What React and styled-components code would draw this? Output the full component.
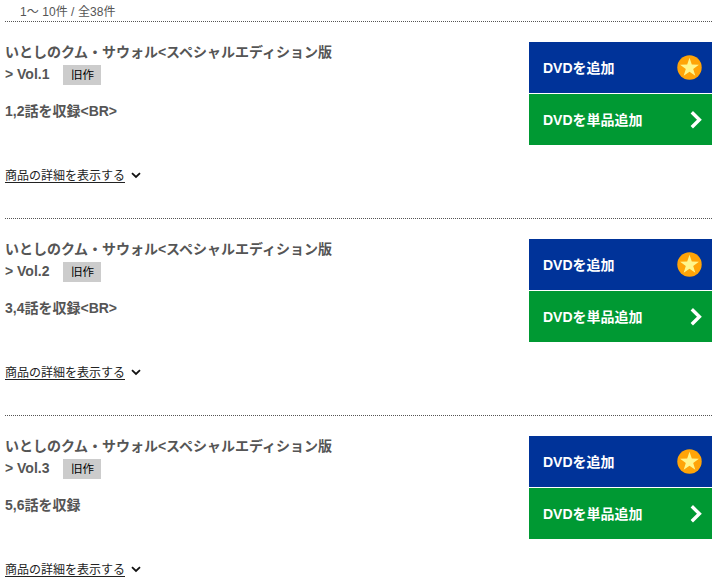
import React from "react";
import styled, { createGlobalStyle } from "styled-components";

const Global = createGlobalStyle`
  * { box-sizing: border-box; }
  body {
    margin: 0;
    background: #fff;
    color: #555;
    font-family: "Liberation Sans", "Noto Sans CJK JP", sans-serif;
    overflow: hidden;
  }
`;

const Page = styled.main`
  width: 707px;
  height: 587px;
  margin-left: 5px;
  overflow: hidden;
`;

const Count = styled.p`
  margin: 0;
  height: 21px;
  padding-left: 15px;
  font-size: 12px;
  line-height: 25px;
  letter-spacing: 0.06px;
  white-space: nowrap;
`;

const Item = styled.article`
  display: flex;
  justify-content: space-between;
  height: 197px;
  padding-top: 19px;
  border-top: 1px dotted #555;
`;

const Info = styled.div`
  width: 340px;
  font-size: 14px;
  font-weight: bold;
`;

const Title = styled.h2`
  margin: 0;
  font-size: 14px;
  line-height: 22px;
  white-space: nowrap;
`;

const TitleLine = styled.span`
  display: flex;
  align-items: flex-start;
  height: 22px;
`;

const Tag = styled.span`
  width: 38px;
  height: 20px;
  margin: 2px 0 0 14px;
  background: #ccc;
  color: #000;
  font-size: 11.5px;
  font-weight: normal;
  line-height: 20px;
  text-align: center;
`;

const Episodes = styled.p`
  margin: 15px 0 0;
  line-height: 22px;
`;

const Details = styled.a`
  display: flex;
  align-items: center;
  gap: 6px;
  height: 20px;
  margin-top: 43px;
  color: #222;
  font-size: 12px;
  font-weight: normal;
  line-height: 20px;
`;

const DetailsLabel = styled.span`
  height: 16px;
  line-height: 18px;
  border-bottom: 1px solid #222;
`;

const Actions = styled.div`
  display: flex;
  flex-direction: column;
  gap: 1px;
  width: 183px;
  margin-top: 1px;
`;

const Action = styled.button`
  display: flex;
  align-items: center;
  justify-content: space-between;
  height: 51px;
  padding: 0 10px 0 14px;
  border: 0;
  background: ${(p) => p.$color};
  color: #fff;
  font: bold 14px/20px "Liberation Sans", "Noto Sans CJK JP", sans-serif;
`;

const Icon = styled.svg`
  display: block;
  flex: none;
`;

const Star = () => (
  <Icon width="25" height="25" viewBox="0 0 25 25">
    <circle cx="12.5" cy="12.5" r="12.2" fill="#ffa408" />
    <path
      d="M12.5 2.8 14.8 9.6 21.9 9.7 16.2 14 18.3 20.8 12.5 16.7 6.7 20.8 8.8 14 3.1 9.7 10.2 9.6Z"
      fill="#fff58c"
    />
  </Icon>
);

const ArrowRight = () => (
  <Icon width="12" height="18" viewBox="0 0 12 18">
    <path d="M1.8 1.3 9.4 8.8 1.8 16.3" fill="none" stroke="#fff" strokeWidth="3.4" />
  </Icon>
);

const ArrowDown = () => (
  <Icon width="10" height="7" viewBox="0 0 10 7">
    <path d="M1 1.2 5 5 9 1.2" fill="none" stroke="#111" strokeWidth="1.8" />
  </Icon>
);

const items = [
  { volume: "Vol.1", episodes: "1,2話を収録<BR>" },
  { volume: "Vol.2", episodes: "3,4話を収録<BR>" },
  { volume: "Vol.3", episodes: "5,6話を収録" },
];

export default function App() {
  return (
    <>
      <Global />
      <Page lang="ja">
        <Count>1〜 10件 / 全38件</Count>
        {items.map((item) => (
          <Item key={item.volume}>
            <Info>
              <Title>
                <TitleLine>{"いとしのクム・サウォル<スペシャルエディション版"}</TitleLine>
                <TitleLine>
                  {`> ${item.volume}`}
                  <Tag>旧作</Tag>
                </TitleLine>
              </Title>
              <Episodes>{item.episodes}</Episodes>
              <Details>
                <DetailsLabel>商品の詳細を表示する</DetailsLabel>
                <ArrowDown />
              </Details>
            </Info>
            <Actions>
              <Action $color="#039">
                DVDを追加
                <Star />
              </Action>
              <Action $color="#093">
                DVDを単品追加
                <ArrowRight />
              </Action>
            </Actions>
          </Item>
        ))}
      </Page>
    </>
  );
}
